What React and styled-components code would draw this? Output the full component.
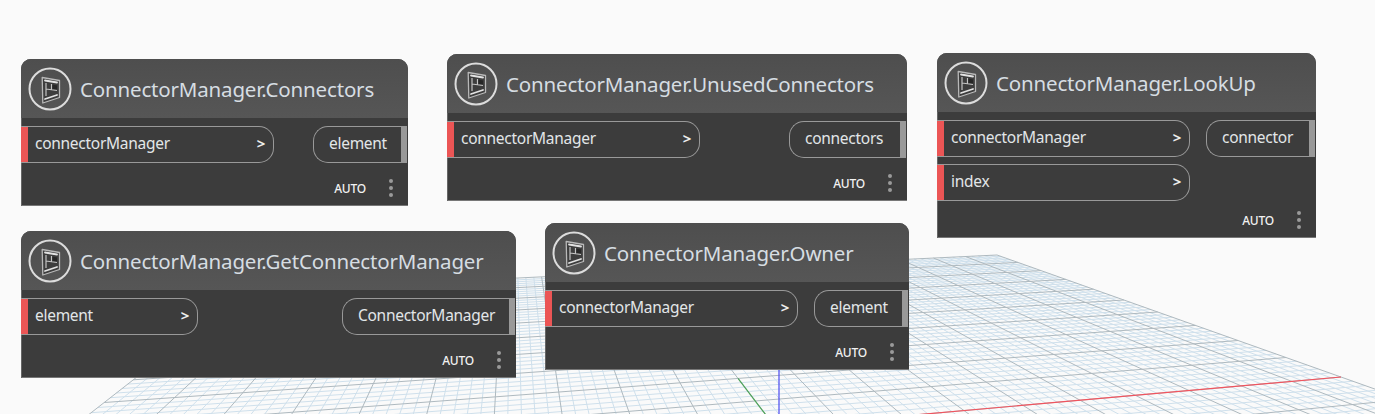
import styled, { createGlobalStyle } from 'styled-components';

const GlobalStyle = createGlobalStyle`
  html, body {
    margin: 0;
    padding: 0;
    background: #fafafa;
  }
  body {
    font-family: "Noto Sans", "Open Sans", sans-serif;
  }
`;

// solve the 8 unknowns of the floor homography from 4 point pairs
const solveHomography = (pairs) => {
  const m = [];
  pairs.forEach(([u, v, x, y]) => {
    m.push([u, v, 1, 0, 0, 0, -u * x, -v * x, x]);
    m.push([0, 0, 0, u, v, 1, -u * y, -v * y, y]);
  });
  for (let i = 0; i < 8; i++) {
    let best = i;
    for (let r = i + 1; r < 8; r++) if (Math.abs(m[r][i]) > Math.abs(m[best][i])) best = r;
    [m[i], m[best]] = [m[best], m[i]];
    for (let r = 0; r < 8; r++) {
      if (r === i) continue;
      const f = m[r][i] / m[i][i];
      for (let c = i; c < 9; c++) m[r][c] -= f * m[i][c];
    }
  }
  return m.map((row, i) => row[8] / row[i]);
};

const H = solveHomography([
  [-1, 0, -18, 498],
  [1, 0, 1341, 377],
  [1, 1, 997, 255],
  [-1, 1, 247, 291],
]);

const project = (u, v) => {
  const w = H[6] * u + H[7] * v + 1;
  return [(H[0] * u + H[1] * v + H[2]) / w, (H[3] * u + H[4] * v + H[5]) / w];
};

const DIVISIONS = 50;
const V_MIN = -0.2;

const gridLines = () => {
  const minor = [];
  const major = [];
  for (let i = -DIVISIONS; i <= DIVISIONS; i++) {
    const t = i / DIVISIONS;
    const target = i % 5 === 0 ? major : minor;
    const a = project(t, 1);
    const b = project(t, V_MIN);
    target.push(`M${a[0].toFixed(1)} ${a[1].toFixed(1)}L${b[0].toFixed(1)} ${b[1].toFixed(1)}`);
    if (t >= V_MIN) {
      const c = project(-1, t);
      const d = project(1, t);
      target.push(`M${c[0].toFixed(1)} ${c[1].toFixed(1)}L${d[0].toFixed(1)} ${d[1].toFixed(1)}`);
    }
  }
  return { minor: minor.join(''), major: major.join('') };
};

const Canvas = styled.div`
  position: relative;
  width: 1375px;
  height: 414px;
  overflow: hidden;
  background: #fafafa;
`;

const Floor = styled.svg`
  position: absolute;
  left: 0;
  top: 0;
`;

const Node = styled.div`
  position: absolute;
  left: ${(p) => p.$x}px;
  top: ${(p) => p.$y}px;
  width: ${(p) => p.$w}px;
  height: ${(p) => p.$h}px;
  box-sizing: border-box;
  display: flex;
  flex-direction: column;
  background: #3c3c3c;
  border-radius: 10px 10px 0 0;
  box-shadow: inset 1px 0 0 #666, inset 0 -1px 0 #777;
  overflow: hidden;
`;

const Header = styled.div`
  height: 59px;
  flex: none;
  box-sizing: border-box;
  padding-left: 7px;
  display: flex;
  align-items: center;
  gap: 8px;
  background: linear-gradient(#4e4e4e, #565656);
`;

const Title = styled.div`
  font-size: 20.5px;
  color: #d6dde2;
  white-space: nowrap;
  letter-spacing: -0.17px;
`;

const Body = styled.div`
  flex: none;
  padding: 8px 1px 0 0;
  display: flex;
  justify-content: space-between;
  align-items: flex-start;
`;

const PortColumn = styled.div`
  display: flex;
  flex-direction: column;
  gap: 7px;
`;

const InputPort = styled.div`
  width: ${(p) => p.$w}px;
  height: 37px;
  box-sizing: border-box;
  display: flex;
  align-items: center;
  border: 1px solid #999;
  border-left: none;
  border-radius: 0 15px 15px 0;
  font-size: 15.5px;
  letter-spacing: -0.28px;
  color: #e2e6e8;
`;

const RedBar = styled.span`
  width: 7px;
  align-self: stretch;
  flex: none;
  background: #eb5555;
`;

const PortLabel = styled.span`
  margin: 0 0 3px 7px;
  flex: 1;
`;

const Chevron = styled.span`
  margin: 0 8px 3px 0;
  font-weight: 700;
  font-size: 15px;
  color: #eee;
`;

const OutputPort = styled.div`
  width: ${(p) => p.$w}px;
  height: 37px;
  box-sizing: border-box;
  display: flex;
  align-items: center;
  justify-content: space-between;
  border: 1px solid #999;
  border-right: none;
  border-radius: 15px 0 0 15px;
  padding-left: 15px;
  font-size: 15.5px;
  letter-spacing: -0.28px;
  color: #e2e6e8;
`;

const OutputLabel = styled.span`
  margin-bottom: 3px;
`;

const GreyBar = styled.span`
  width: 6px;
  align-self: stretch;
  flex: none;
  background: #999;
`;

const Footer = styled.div`
  flex: 1;
  display: flex;
  justify-content: flex-end;
  align-items: flex-end;
  gap: 23px;
  padding: 0 15px 9px 0;
`;

const AutoLabel = styled.span`
  font-size: 12px;
  line-height: 17px;
  letter-spacing: -0.2px;
  font-weight: 500;
  color: #f2f2f2;
`;

const Dots = styled.span`
  display: flex;
  flex-direction: column;
  justify-content: space-between;
  height: 18px;
`;

const Dot = styled.i`
  display: block;
  width: 4px;
  height: 4px;
  border-radius: 50%;
  background: #9a9a9a;
`;

const NodeIcon = () => (
  <svg width="44" height="44" viewBox="0 0 44 44" fill="none">
    <circle cx="22" cy="22" r="20.5" stroke="#dcdcdc" strokeWidth="2" />
    <path d="M14.2 10.5L31.5 13.5V30.5L14.8 36Z" fill="#3d3d3d" stroke="#b8b8b8" strokeWidth="1.3" strokeLinejoin="round" />
    <path d="M24 17.5L29 18.5V22.5L24 22Z" fill="#262626" />
    <path d="M18 16V29M18 22L29 23.5M23.5 17V23" stroke="#c4c4c4" strokeWidth="1.2" />
    <path d="M17 13.5L29 15.5M17 32L29 28" stroke="#e2e2e2" strokeWidth="1.8" strokeLinecap="round" />
  </svg>
);

const nodes = [
  { name: 'Connectors', x: 21, y: 59, w: 387, h: 147, inputW: 253, inputs: ['connectorManager'], output: 'element', outputW: 94 },
  { name: 'UnusedConnectors', x: 447, y: 54, w: 460, h: 147, inputW: 253, inputs: ['connectorManager'], output: 'connectors', outputW: 117 },
  { name: 'LookUp', x: 937, y: 53, w: 379, h: 185, inputW: 253, inputs: ['connectorManager', 'index'], output: 'connector', outputW: 109 },
  { name: 'GetConnectorManager', x: 21, y: 231, w: 495, h: 147, inputW: 177, inputs: ['element'], output: 'ConnectorManager', outputW: 173 },
  { name: 'Owner', x: 545, y: 223, w: 364, h: 147, inputW: 253, inputs: ['connectorManager'], output: 'element', outputW: 94 },
];

const App = () => {
  const grid = gridLines();
  const [rx0, ry0] = project(0, 0);
  const [rx1, ry1] = project(1, 0);
  const [gx1, gy1] = project(0, 0.2);

  return (
    <Canvas>
      <GlobalStyle />
      <Floor width="1375" height="414" viewBox="0 0 1375 414">
        <path d={grid.minor} stroke="#cfe0ec" strokeWidth="1" fill="none" />
        <path d={grid.major} stroke="#aeb9bf" strokeWidth="1" fill="none" />
        <line x1={rx0} y1={ry0} x2={rx1} y2={ry1} stroke="#f0555f" strokeWidth="1.2" />
        <line x1={rx0} y1={ry0} x2={gx1} y2={gy1} stroke="#4fa35a" strokeWidth="1.2" />
        <line x1="779" y1="427" x2="779" y2="360" stroke="#4a4af0" strokeWidth="1.2" />
      </Floor>
      {nodes.map((n) => (
        <Node key={n.name} $x={n.x} $y={n.y} $w={n.w} $h={n.h}>
          <Header>
            <NodeIcon />
            <Title>ConnectorManager.{n.name}</Title>
          </Header>
          <Body>
            <PortColumn>
              {n.inputs.map((label) => (
                <InputPort key={label} $w={n.inputW}>
                  <RedBar />
                  <PortLabel>{label}</PortLabel>
                  <Chevron>&gt;</Chevron>
                </InputPort>
              ))}
            </PortColumn>
            <OutputPort $w={n.outputW}>
              <OutputLabel>{n.output}</OutputLabel>
              <GreyBar />
            </OutputPort>
          </Body>
          <Footer>
            <AutoLabel>AUTO</AutoLabel>
            <Dots>
              <Dot />
              <Dot />
              <Dot />
            </Dots>
          </Footer>
        </Node>
      ))}
    </Canvas>
  );
};

export default App;
